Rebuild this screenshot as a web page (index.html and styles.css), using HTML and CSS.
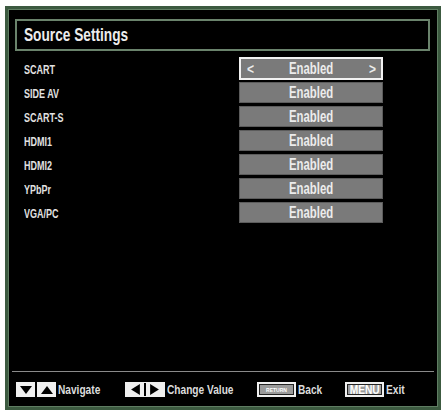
FILE: index.html
```html
<!DOCTYPE html>
<html>
<head>
<meta charset="utf-8">
<link rel="stylesheet" href="styles.css">
</head>
<body>
<div class="frame">
  <div class="title"><span class="cx">Source Settings</span></div>
  <div class="list">
    <div class="row"><span class="label"><span class="cx">SCART</span></span><span class="value selected"><span class="arr">&lt;</span><span class="val">Enabled</span><span class="arr">&gt;</span></span></div>
    <div class="row"><span class="label"><span class="cx">SIDE AV</span></span><span class="value"><span class="val">Enabled</span></span></div>
    <div class="row"><span class="label"><span class="cx">SCART-S</span></span><span class="value"><span class="val">Enabled</span></span></div>
    <div class="row"><span class="label"><span class="cx">HDMI1</span></span><span class="value"><span class="val">Enabled</span></span></div>
    <div class="row"><span class="label"><span class="cx">HDMI2</span></span><span class="value"><span class="val">Enabled</span></span></div>
    <div class="row"><span class="label"><span class="cx">YPbPr</span></span><span class="value"><span class="val">Enabled</span></span></div>
    <div class="row"><span class="label"><span class="cx">VGA/PC</span></span><span class="value"><span class="val">Enabled</span></span></div>
  </div>
  <div class="footer">
    <div class="item nav">
      <span class="key tri"><svg width="14" height="10" viewBox="0 0 14 10"><path d="M1 1 H13 L7 9 Z" fill="#000"/></svg></span>
      <span class="key tri"><svg width="14" height="10" viewBox="0 0 14 10"><path d="M1 9 H13 L7 1 Z" fill="#000"/></svg></span>
      <span class="txt"><span class="cx">Navigate</span></span>
    </div>
    <div class="item change">
      <span class="key dual"><svg width="11" height="11" viewBox="0 0 10 10"><path d="M9 0 V10 L1 5 Z" fill="#000"/></svg><span class="sep"></span><svg width="11" height="11" viewBox="0 0 10 10"><path d="M1 0 V10 L9 5 Z" fill="#000"/></svg></span>
      <span class="txt"><span class="cx">Change Value</span></span>
    </div>
    <div class="item back">
      <span class="key word small">RETURN</span>
      <span class="txt"><span class="cx">Back</span></span>
    </div>
    <div class="item exit">
      <span class="key word"><span class="cx">MENU</span></span>
      <span class="txt"><span class="cx">Exit</span></span>
    </div>
  </div>
</div>
</body>
</html>
```

FILE: styles.css
```css
* { box-sizing: border-box; }
html, body { margin: 0; padding: 0; background: #ffffff; }
body {
  width: 443px;
  height: 418px;
  padding: 6px 2px 8px 5px;
  font-family: "Liberation Sans", Arial, sans-serif;
  font-weight: bold;
  color: #e6e6e6;
}
.cx {
  display: inline-block;
  transform-origin: left center;
  white-space: nowrap;
}
.frame {
  width: 436px;
  height: 404px;
  background: #000;
  border: 3px solid #3c5a40;
  box-shadow: inset 0 0 0 1px #5f7d62;
  display: flex;
  flex-direction: column;
  padding: 10px 8px 0 7px;
}
.title {
  height: 32px;
  border: 2px solid #6a836c;
  font-size: 18px;
  line-height: 28px;
  padding-left: 7px;
  color: #ececec;
}
.title .cx { transform: scaleX(0.76); }
.list {
  flex: 1;
  display: flex;
  flex-direction: column;
  gap: 3px;
  margin-top: 7px;
  padding-left: 2px;
}
.row {
  display: flex;
  align-items: center;
  height: 21px;
}
.label {
  width: 222px;
  font-size: 12.5px;
  padding-left: 7px;
  padding-top: 3px;
  color: #e2e2e2;
}
.label .cx { transform: scaleX(0.72); }
.value {
  width: 144px;
  height: 21px;
  background: #7a7a7a;
  border: 1px solid #5c5c5c;
  display: flex;
  align-items: center;
  justify-content: center;
  font-size: 16px;
  color: #ececec;
}
.val { display: inline-block; transform: scaleX(0.71); }
.value.selected {
  border: 2px solid #f2f2f2;
  justify-content: space-between;
  padding: 0 4px 0 5px;
  height: 23px;
}
.arr { font-size: 15px; line-height: 1; display: inline-block; transform: scaleX(0.8); }
.footer {
  height: 36px;
  border-top: 1px solid #8a8a8a;
  margin: 2px -4px 0 -3px;
  display: flex;
  align-items: center;
  padding-left: 4px;
  font-size: 13px;
  color: #dcdcdc;
}
.footer .cx { transform: scaleX(0.78); }
.item { display: flex; align-items: center; }
.nav { width: 109px; gap: 2px; }
.change { width: 132px; gap: 2px; }
.back { width: 88px; gap: 2px; }
.exit { gap: 2px; }
.key {
  border: 1.5px solid #f0f0f0;
  background: #f0f0f0;
  display: inline-flex;
  align-items: center;
  justify-content: center;
  height: 15px;
  flex: none;
}
.tri { width: 19px; }
.dual { width: 40px; gap: 3px; padding: 0 2px; }
.dual .sep { width: 2px; height: 13px; background: #000; }
.word {
  color: #fff;
  background: #9a9a9a;
  width: 39px;
  font-size: 12px;
  box-shadow: inset 0 0 0 1px #222;
  border: 2px solid #f0f0f0;
}
.word .cx { transform: scaleX(0.85); transform-origin: center; }
.word.small { font-size: 5px; letter-spacing: 0; }
```
